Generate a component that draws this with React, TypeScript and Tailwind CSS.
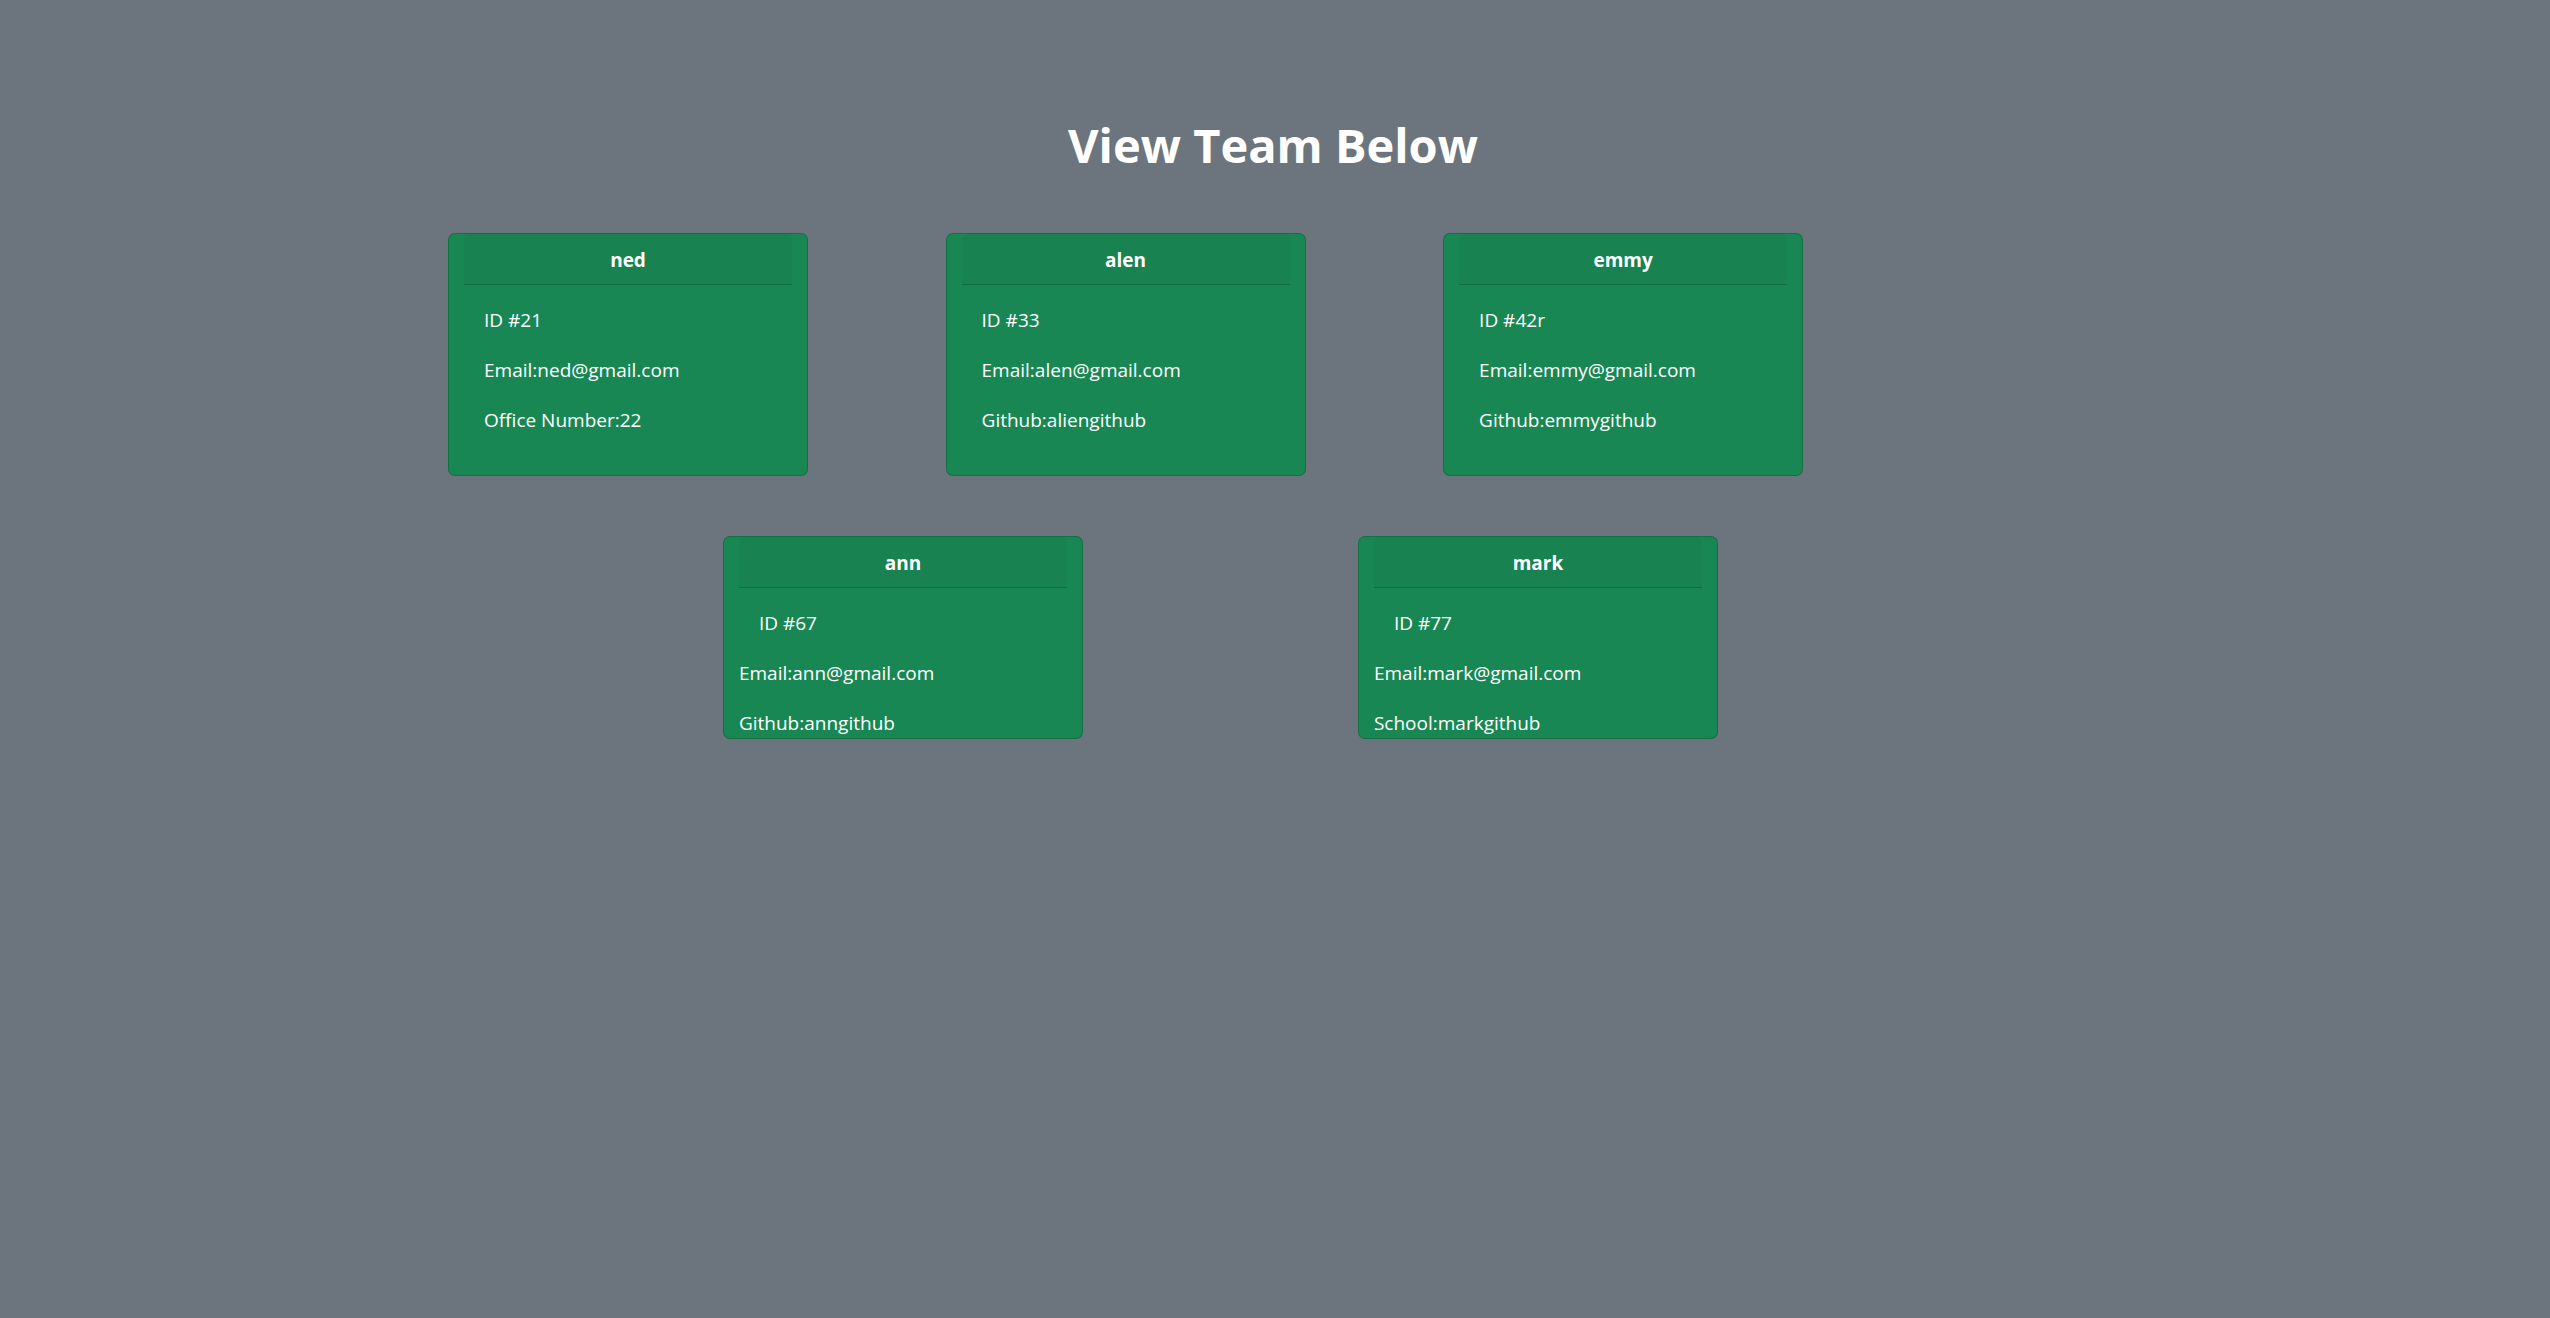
type Member = { name: string; id: string; email: string; extra: string };

const leads: Member[] = [
  { name: "ned", id: "21", email: "ned@gmail.com", extra: "Office Number:22" },
  { name: "alen", id: "33", email: "alen@gmail.com", extra: "Github:aliengithub" },
  { name: "emmy", id: "42r", email: "emmy@gmail.com", extra: "Github:emmygithub" },
];

const juniors: Member[] = [
  { name: "ann", id: "67", email: "ann@gmail.com", extra: "Github:anngithub" },
  { name: "mark", id: "77", email: "mark@gmail.com", extra: "School:markgithub" },
];

function Card({ member, compact = false }: { member: Member; compact?: boolean }) {
  return (
    <article className="w-[360px] rounded-[7px] border border-black/[0.175] bg-[#198754] px-[15px]">
      <h2 className="rounded-t-md border-b border-black/[0.175] bg-black/[0.03] pt-[11px] pb-[9px] text-center font-bold">
        {member.name}
      </h2>
      <div className={compact ? "flex flex-col gap-5 pt-5" : "flex flex-col gap-5 px-5 pt-5 pb-10"}>
        <p className={compact ? "px-5" : ""}>ID #{member.id}</p>
        <p>Email:{member.email}</p>
        <p>{member.extra}</p>
      </div>
    </article>
  );
}

export default function App() {
  return (
    <main className="min-h-screen bg-[#6c757d] pt-[115px] font-['Open_Sans','Noto_Sans',sans-serif] text-[19px] leading-[30px] text-white">
      <h1 className="pr-1 text-center text-[47px] leading-[60px] font-bold">View Team Below</h1>
      <section className="mt-[58px] flex flex-wrap justify-between gap-y-15 pr-[29.29%] pl-[17.57%]">
        {leads.map((m) => (
          <Card key={m.name} member={m} />
        ))}
      </section>
      <section className="mt-15 flex flex-wrap justify-between gap-y-15 pr-[32.63%] pl-[28.35%]">
        {juniors.map((m) => (
          <Card key={m.name} member={m} compact />
        ))}
      </section>
    </main>
  );
}
